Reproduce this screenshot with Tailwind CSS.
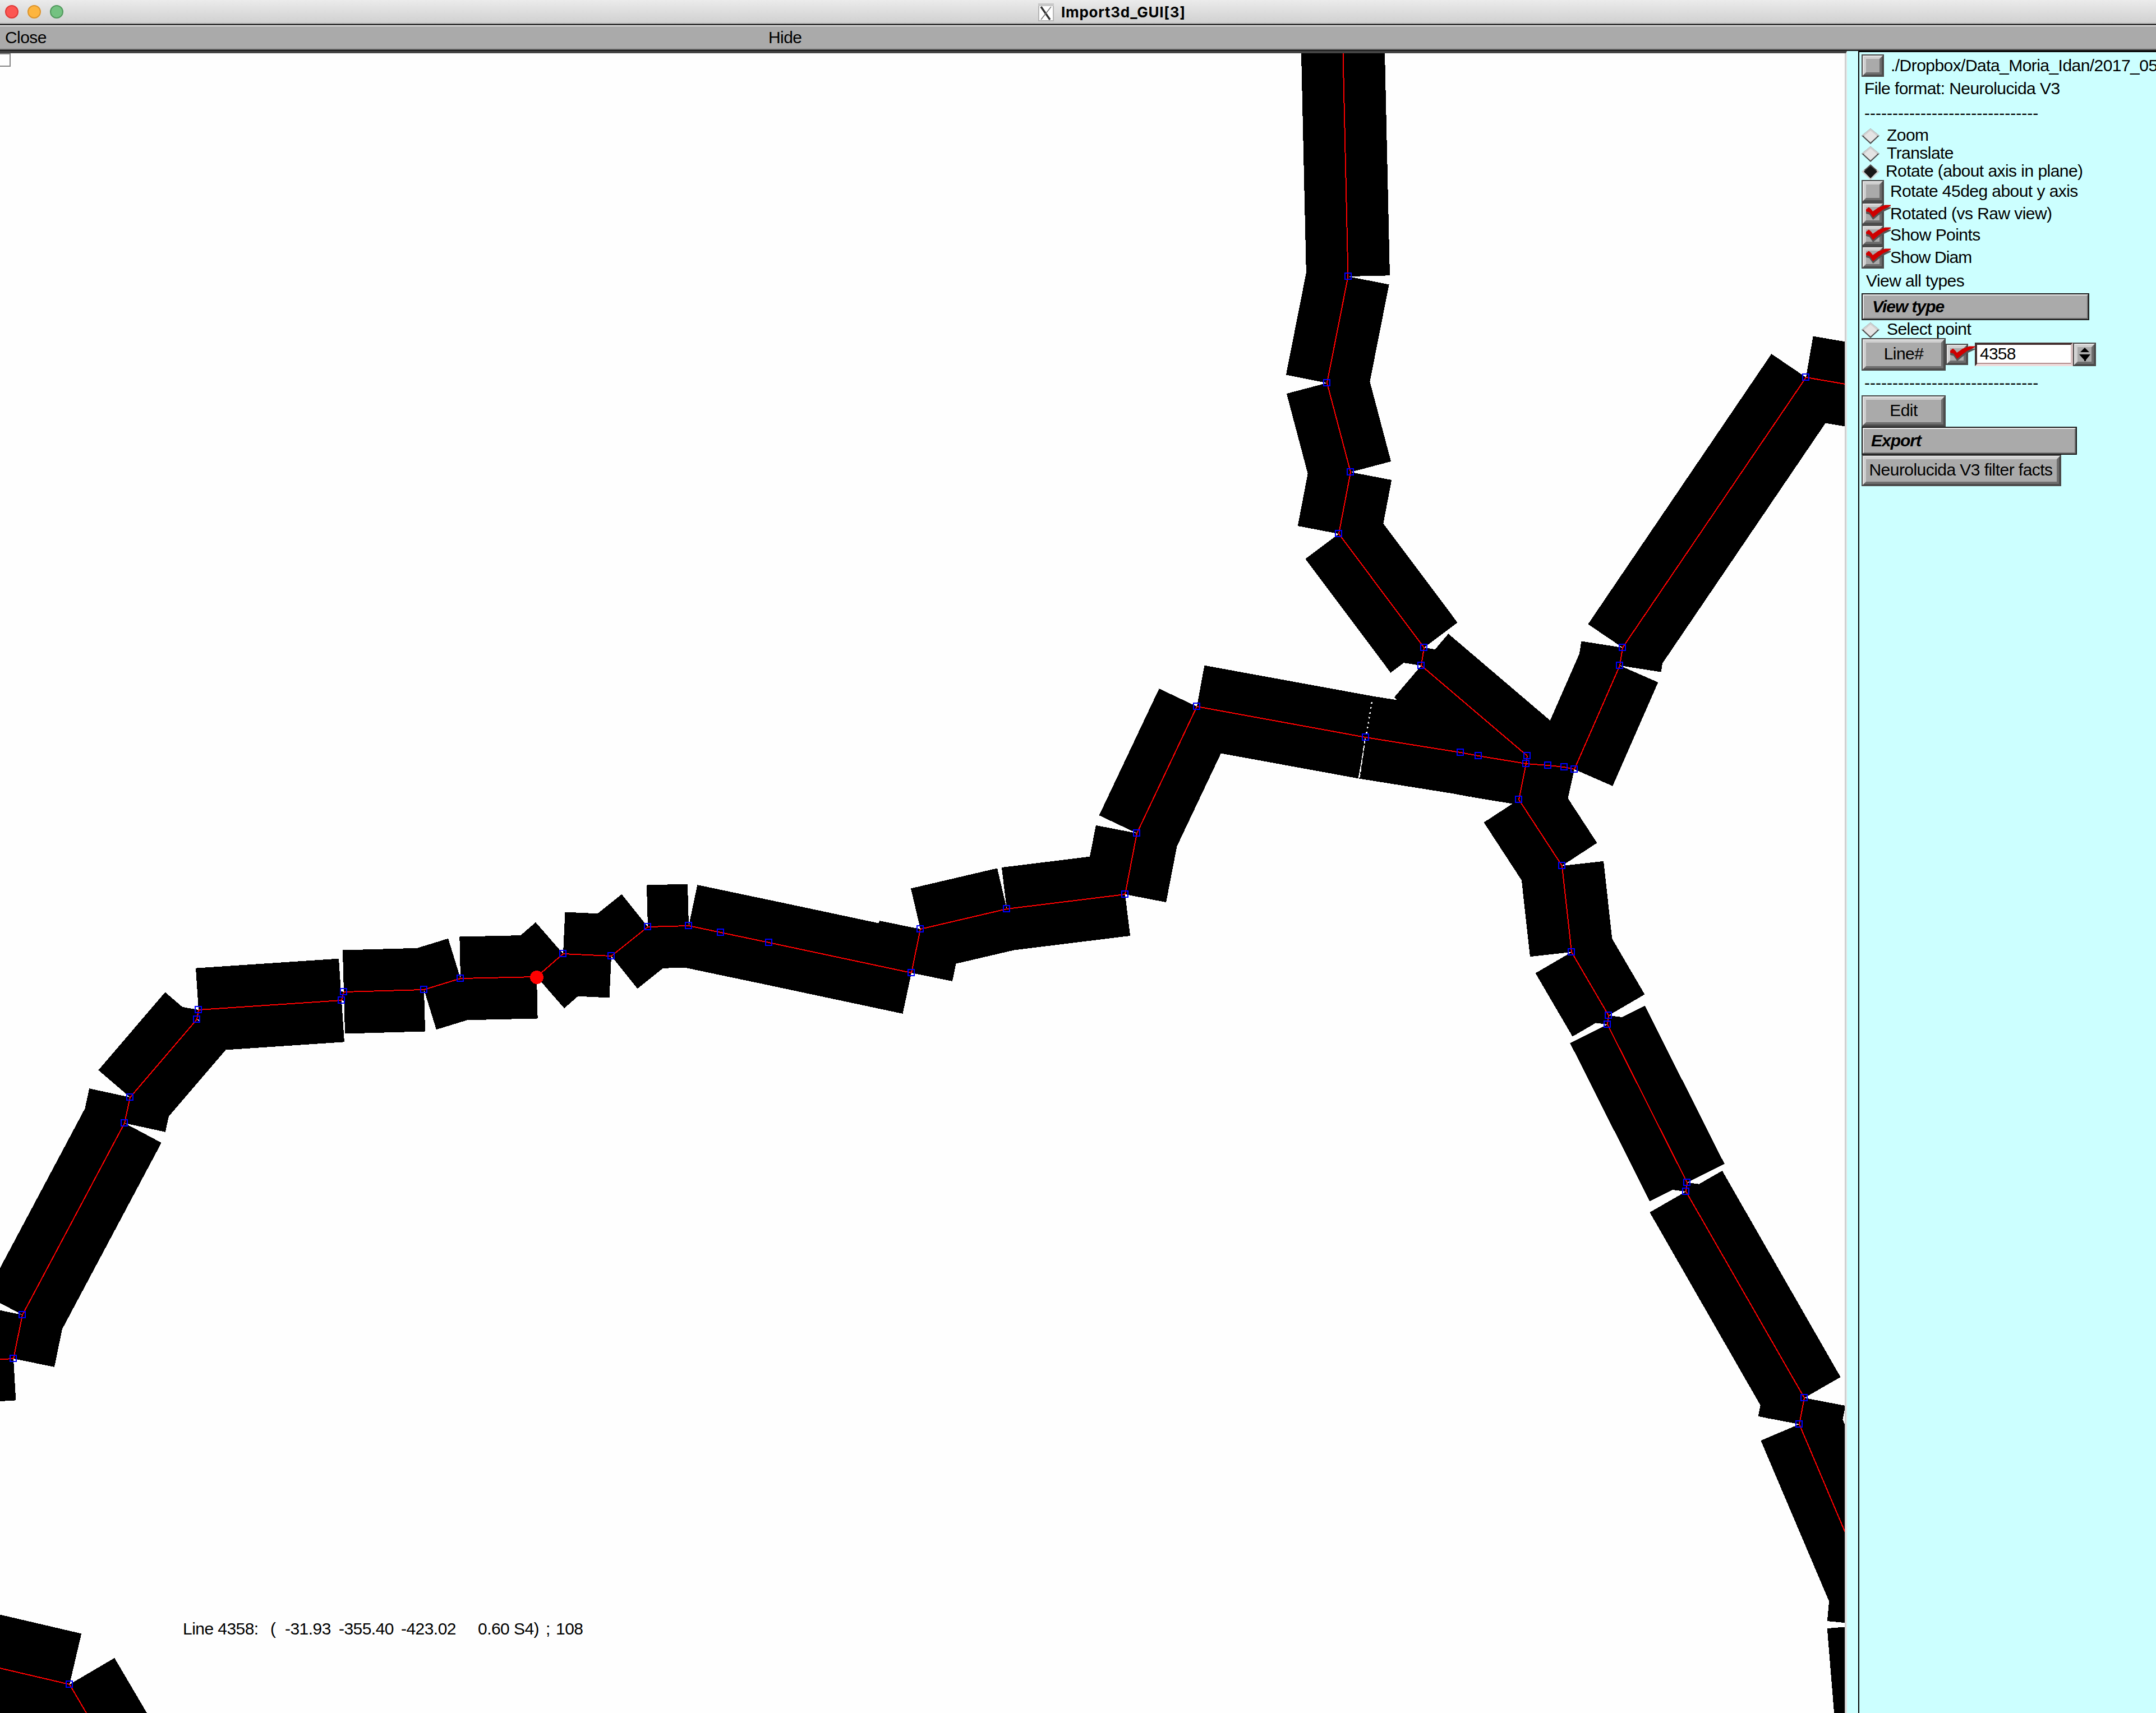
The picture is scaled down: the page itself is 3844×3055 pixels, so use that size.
<!DOCTYPE html>
<html lang="en">
<head>
<meta charset="utf-8">
<title>Import3d_GUI[3]</title>
<script src="https://cdn.jsdelivr.net/npm/@tailwindcss/browser@4"></script>
</head>
<body class="flex h-[3055px] w-[3844px] flex-col overflow-hidden bg-[#fefefe] font-['Liberation_Sans',Arial,sans-serif] text-[30px] leading-8 tracking-[-0.55px] text-black">

<svg class="hidden">
  <symbol id="diamond" viewBox="0 0 32 28">
    <path d="M16 0L32 13L16 28L0 13Z" fill="#505050"/>
    <path d="M16 0L32 13H0Z" fill="#cfcfcf"/>
    <path d="M16 4L28 14L16 25L4 14Z" fill="#e4e4e4"/>
  </symbol>
  <symbol id="diamond-on" viewBox="0 0 32 28">
    <path d="M16 0L32 13L16 28L0 13Z" fill="#cfcfcf"/>
    <path d="M16 0L28 11H4Z" fill="#505050"/>
    <path d="M16 3L28 13L16 25L4 13Z" fill="#181818"/>
  </symbol>
  <symbol id="check" viewBox="0 0 54 36">
    <path transform="translate(0 4)" d="M8 12.5L13 8.5L17 12L20 16L30 9L42 4.5H52V6.5L39 12.5L30 19L20.5 27L14 17.5L8 16Z" fill="#555"/>
    <path d="M8 12.5L13 8.5L17 12L20 16L30 9L42 4.5H52V6.5L39 12.5L30 19L20.5 27L14 17.5L8 16Z" fill="#cf0000"/>
  </symbol>
</svg>

<!-- Title bar -->
<header class="flex h-[45px] shrink-0 items-center border-b-2 border-[#1a1a1a] bg-linear-to-b from-[#ebebeb] to-[#cfcfcf] pl-[9px] shadow-[inset_0_-2px_0_#a0a0a0]">
  <div class="flex gap-4 pb-px">
    <i class="size-6 rounded-full border-2 border-[#df3a38] bg-[#fc5652]"></i>
    <i class="size-6 rounded-full border-2 border-[#dd942c] bg-[#fdb53f]"></i>
    <i class="size-6 rounded-full border-2 border-[#529a5e] bg-[#74c281]"></i>
  </div>
  <div class="ml-[1738px] flex items-center gap-[13px]">
    <svg class="h-8 w-7" viewBox="0 0 28 32"><rect x="1" y="1" width="26" height="30" fill="#fff" stroke="#b5b5b5" stroke-width="2"/><rect x="0" y="0" width="28" height="5" fill="#c8c8c8"/><path d="M5 6L21 29" stroke="#333" stroke-width="3.5"/><path d="M23 6L5 29" stroke="#777" stroke-width="1.5"/></svg>
    <span class="font-['Inter',sans-serif] text-[26px] font-bold tracking-[0.7px]">Import3d_GUI[3]</span>
  </div>
</header>

<!-- Menu bar -->
<nav class="flex h-[46px] shrink-0 items-center border-t-2 border-b-2 border-t-[#ebebeb] border-b-[#1a1a1a] bg-[#aaa] pb-0.5 pl-[9px] shadow-[inset_0_-2px_0_#6e6e6e]">
  <span class="w-[1361px]">Close</span><span>Hide</span>
</nav>

<main class="flex min-h-0 grow">
  <!-- Drawing canvas -->
  <section class="w-[3293px] shrink-0 border-t-4 border-r-2 border-t-[#444] border-r-[#e2e2e2]">
    <svg class="block h-[2960px] w-[3291px] border-r-2 border-[#ccc]" viewBox="0 95 3289 2960" shape-rendering="crispEdges" fill="none">
      <path d="M0 96H18V118H0" stroke="#858585" stroke-width="2"/>
      <g transform="translate(0 -1)">
        <g id="shapes" stroke="#000"></g>
        <path d="M1275 1662L1295 1666M1361 1680L1381 1684M2594 1341.5L2614 1345M2626 1347.5L2646 1350.8" stroke="#000" stroke-width="147"/>
        <path d="M2446 1253L2436 1312" stroke="#fff" stroke-width="2.5" stroke-dasharray="3 6"/>
        <path d="M2434 1318L2424 1387" stroke="#fff" stroke-width="2" stroke-dasharray="9 4"/>
        <g id="axes" stroke="#f00" stroke-width="2"></g>
        <g id="points" stroke="#00f" stroke-width="2"></g>
        <circle cx="957" cy="1744" r="12" fill="#f00"/>
      </g>
      <g fill="#000" shape-rendering="auto" font-size="30">
        <text y="2914.5"><tspan x="326">Line 4358:</tspan><tspan x="482">(</tspan><tspan x="508">-31.93</tspan><tspan x="604">-355.40</tspan><tspan x="715">-423.02</tspan><tspan x="852">0.60 S4)</tspan><tspan x="973">;</tspan><tspan x="991">108</tspan></text>
      </g>
    </svg>
  </section>

  <!-- Control panel -->
  <aside class="ml-5 flex min-w-0 grow flex-col items-start border-t-2 border-l-2 border-black bg-[#cff] pt-1 pl-1 whitespace-nowrap shadow-[-20px_0_0_#cff]">
    <div class="flex h-10 items-center gap-[12px]">
      <div class="size-10 bg-[#4a4a4a] p-0.5"><div class="size-full border-2 border-t-[#e4e4e4] border-r-[#4c4c4c] border-b-[#4c4c4c] border-l-[#e4e4e4]"><div class="size-full border-4 border-t-[#cfcfcf] border-r-[#6e6e6e] border-b-[#6e6e6e] border-l-[#cfcfcf] bg-[#aaa]"></div></div></div>
      <span class="pb-px">./Dropbox/Data_Moria_Idan/2017_05</span>
    </div>
    <p class="flex h-[42px] items-center pl-[5px]">File format: Neurolucida V3</p>
    <p class="flex h-[46px] items-center pl-[5px] tracking-[0.02px]">-------------------------------</p>
    <div class="flex h-8 items-end gap-[13px]"><svg class="h-7 w-8"><use href="#diamond"/></svg><span>Zoom</span></div>
    <div class="flex h-8 items-end gap-[13px]"><svg class="h-7 w-8"><use href="#diamond"/></svg><span>Translate</span></div>
    <div class="flex h-8 items-end gap-[11px]"><svg class="h-7 w-8"><use href="#diamond-on"/></svg><span>Rotate (about axis in plane)</span></div>
    <div class="flex h-10 items-center gap-[11px]">
      <div class="size-10 bg-[#4a4a4a] p-0.5"><div class="size-full border-2 border-t-[#e4e4e4] border-r-[#4c4c4c] border-b-[#4c4c4c] border-l-[#e4e4e4]"><div class="size-full border-4 border-t-[#cfcfcf] border-r-[#6e6e6e] border-b-[#6e6e6e] border-l-[#cfcfcf] bg-[#aaa]"></div></div></div>
      <span class="pb-px">Rotate 45deg about y axis</span>
    </div>
    <div class="flex h-10 items-center gap-[11px]">
      <div class="relative size-10 bg-[#4a4a4a] p-0.5"><div class="size-full border-2 border-t-[#e4e4e4] border-r-[#4c4c4c] border-b-[#4c4c4c] border-l-[#e4e4e4]"><div class="size-full border-4 border-t-[#cfcfcf] border-r-[#6e6e6e] border-b-[#6e6e6e] border-l-[#cfcfcf] bg-[#aaa]"></div></div><svg class="absolute top-0 left-0 h-9 w-[54px]"><use href="#check"/></svg></div>
      <span class="pb-px">Rotated (vs Raw view)</span>
    </div>
    <div class="flex h-[38px] items-center gap-[11px]">
      <div class="relative h-[38px] w-10 bg-[#4a4a4a] p-0.5"><div class="size-full border-2 border-t-[#e4e4e4] border-r-[#4c4c4c] border-b-[#4c4c4c] border-l-[#e4e4e4]"><div class="size-full border-4 border-t-[#cfcfcf] border-r-[#6e6e6e] border-b-[#6e6e6e] border-l-[#cfcfcf] bg-[#aaa]"></div></div><svg class="absolute top-0 left-0 h-9 w-[54px]"><use href="#check"/></svg></div>
      <span class="pb-0.5">Show Points</span>
    </div>
    <div class="flex h-10 items-center gap-[11px]">
      <div class="relative size-10 bg-[#4a4a4a] p-0.5"><div class="size-full border-2 border-t-[#e4e4e4] border-r-[#4c4c4c] border-b-[#4c4c4c] border-l-[#e4e4e4]"><div class="size-full border-4 border-t-[#cfcfcf] border-r-[#6e6e6e] border-b-[#6e6e6e] border-l-[#cfcfcf] bg-[#aaa]"></div></div><svg class="absolute top-0 left-0 h-9 w-[54px]"><use href="#check"/></svg></div>
      <span class="pb-px tracking-[-0.9px]">Show Diam</span>
    </div>
    <p class="flex h-11 items-center pb-px pl-2">View all types</p>
    <div class="h-12 w-[406px] border-2 border-[#1a1a1a]"><div class="flex size-full items-center border-2 border-t-[#e8e8e8] border-r-[#6e6e6e] border-b-[#6e6e6e] border-l-[#e8e8e8] bg-[#aaa] pb-px pl-[15px] font-bold tracking-[-1px] italic">View type</div></div>
    <div class="flex h-8 items-end gap-[13px]"><svg class="h-7 w-8"><use href="#diamond"/></svg><span>Select point</span></div>
    <div class="flex h-[58px] items-center">
      <div class="h-[58px] w-[150px] bg-[#4a4a4a] p-0.5"><div class="size-full border-2 border-t-[#e4e4e4] border-r-[#4c4c4c] border-b-[#4c4c4c] border-l-[#e4e4e4]"><div class="flex size-full items-center justify-center border-4 border-t-[#cfcfcf] border-r-[#6e6e6e] border-b-[#6e6e6e] border-l-[#cfcfcf] bg-[#aaa] pb-[3px]">Line#</div></div></div>
      <div class="relative h-[38px] w-10 bg-[#4a4a4a] p-0.5"><div class="size-full border-2 border-t-[#e4e4e4] border-r-[#4c4c4c] border-b-[#4c4c4c] border-l-[#e4e4e4]"><div class="size-full border-4 border-t-[#cfcfcf] border-r-[#6e6e6e] border-b-[#6e6e6e] border-l-[#cfcfcf] bg-[#aaa]"></div></div><svg class="absolute top-0 left-0 h-9 w-[54px]"><use href="#check"/></svg></div>
      <div class="ml-3 flex h-[42px] w-[175px] items-center border-4 border-t-[#432f2f] border-r-[#d9c2c2] border-b-[#eedcdc] border-l-[#432f2f] bg-white pl-[5px] shadow-[inset_0_-2px_0_#b38f8f]"><span class="pb-[3px] tracking-[-0.8px]">4358</span></div>
      <div class="h-[42px] w-[41px] bg-[#4a4a4a] p-0.5"><div class="size-full border-2 border-t-[#e4e4e4] border-r-[#4c4c4c] border-b-[#4c4c4c] border-l-[#e4e4e4]"><div class="flex size-full items-center justify-center border-4 border-t-[#cfcfcf] border-r-[#6e6e6e] border-b-[#6e6e6e] border-l-[#cfcfcf] bg-[#aaa]"><svg class="h-6 w-5" viewBox="0 0 20 24"><path d="M10 0L18 8H2ZM0 12H20L12 22V24H9V22Z"/></svg></div></div></div>
    </div>
    <p class="flex h-11 items-center pl-[5px] tracking-[0.02px]">-------------------------------</p>
    <div class="h-14 w-[150px] bg-[#4a4a4a] p-0.5"><div class="size-full border-2 border-t-[#e4e4e4] border-r-[#4c4c4c] border-b-[#4c4c4c] border-l-[#e4e4e4]"><div class="flex size-full items-center justify-center border-4 border-t-[#cfcfcf] border-r-[#6e6e6e] border-b-[#6e6e6e] border-l-[#cfcfcf] bg-[#aaa] pb-0.5">Edit</div></div></div>
    <div class="h-[50px] w-[384px] border-2 border-[#1a1a1a]"><div class="flex size-full items-center border-2 border-t-[#e8e8e8] border-r-[#6e6e6e] border-b-[#6e6e6e] border-l-[#e8e8e8] bg-[#aaa] pl-[13px] font-bold tracking-[-1px] italic">Export</div></div>
    <div class="h-14 w-[356px] bg-[#4a4a4a] p-0.5"><div class="size-full border-2 border-t-[#e4e4e4] border-r-[#4c4c4c] border-b-[#4c4c4c] border-l-[#e4e4e4]"><div class="flex size-full items-center justify-center border-4 border-t-[#cfcfcf] border-r-[#6e6e6e] border-b-[#6e6e6e] border-l-[#cfcfcf] bg-[#aaa] pr-0.5 pb-0.5">Neurolucida V3 filter facts</div></div></div>
  </aside>
</main>

<script>
// Each neurite: diameter in px and its traced points.
const neurites = [
  [149, [[-80,2430],[24,2424],[40,2346],[222,2004],[232,1958],[351,1819],[354,1802],[609,1785],[613,1770],[756,1766],[821,1746],[957,1743],[1004,1702],[1090,1706],[1155,1654],[1228,1652],[1285,1664],[1371,1682],[1625,1736],[1641,1658],[1795,1622],[2006,1596],[2027,1487],[2134,1261],[2435,1316],[2604,1343],[2636,1349],[2721,1363],[2760,1366],[2789,1369],[2807,1373],[2888,1188],[2893,1156],[3220,674],[3389,703]]],
  [149, [[2391,-60],[2403.5,494],[2366,684],[2408,843],[2387,953],[2539,1156],[2534,1188],[2723,1349],[2721,1363],[2708,1427],[2785,1545],[2802,1699],[2868,1812],[2866,1828],[3008,2110],[3006,2126],[3217,2494],[3208,2541],[3337,2845],[3332,2899],[3346,3070]]],
  [186, [[-60,2962],[124,3005],[184,3107]]]
];
const seg = pts => pts.slice(1).map((p, i) => `M${pts[i]}L${p}`).join('');
let shapes = '', axes = '', points = '';
for (const [d, pts] of neurites) {
  shapes += `<path d="${seg(pts)}" stroke-width="${d}"/>`;
  axes += `<path d="${seg(pts)}"/>`;
  for (const [x, y] of pts) if (x !== 957) points += `<rect x="${Math.round(x) - 6}" y="${Math.round(y) - 6}" width="11" height="11"/>`;
}
document.getElementById('shapes').innerHTML = shapes;
document.getElementById('axes').innerHTML = axes;
document.getElementById('points').innerHTML = points;
</script>
</body>
</html>
